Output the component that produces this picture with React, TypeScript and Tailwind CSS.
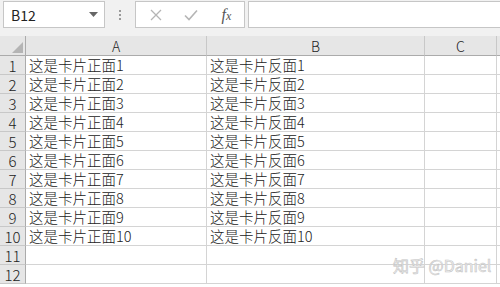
import React from "react";

const font = { fontFamily: '"Noto Sans CJK SC", "Noto Sans", sans-serif' };

export default function App() {
  const rows = Array.from({ length: 12 }, (_, i) => i + 1);
  return (
    <div className="relative w-[500px] h-[287px] overflow-hidden bg-white text-[#222]" style={font}>
      {/* toolbar */}
      <div className="h-[36px] bg-[#f1f1f1] flex items-start pt-[1px]">
        <div className="ml-[3px] w-[102px] h-[27px] bg-white border border-[#c6c6c6] flex items-center pl-[7px] pr-[6px]">
          <span className="text-[14px] leading-none flex-1">B12</span>
          <svg width="9" height="5" viewBox="0 0 9 5"><path d="M0 0 L9 0 L4.5 5 Z" fill="#666" /></svg>
        </div>
        <div className="w-[30px] h-[27px] flex flex-col items-center justify-center gap-[2px]">
          <div className="w-[2px] h-[2px] bg-[#9a9a9a]" />
          <div className="w-[2px] h-[2px] bg-[#9a9a9a]" />
          <div className="w-[2px] h-[2px] bg-[#9a9a9a]" />
        </div>
        <div className="w-[110px] h-[27px] bg-white border border-[#c6c6c6] flex items-center">
          <div className="w-[38px] flex justify-center pl-[2px]">
            <svg width="12" height="12" viewBox="0 0 12 12"><path d="M1 1 L11 11 M11 1 L1 11" stroke="#b5b5b5" strokeWidth="1.3" /></svg>
          </div>
          <div className="w-[36px] flex justify-center">
            <svg width="14" height="12" viewBox="0 0 14 12"><path d="M1 6.5 L5 10.5 L13 1.5" stroke="#b5b5b5" strokeWidth="1.6" fill="none" /></svg>
          </div>
          <div className="w-[36px] flex justify-center">
            <span className="italic text-[16px] leading-none text-[#555]" style={{ fontFamily: '"Liberation Serif", serif' }}>
              f<span className="text-[12px]">x</span>
            </span>
          </div>
        </div>
        <div className="ml-[3px] flex-1 h-[27px] bg-white border border-[#c6c6c6] border-r-0" />
      </div>
      {/* grid */}
      <div className="grid grid-cols-[26px_181px_218px_72px_3px] grid-rows-[20px_repeat(12,19px)] text-[14.5px] font-light">
        <div className="bg-[#e6e6e6] border-r border-b border-[#ababab] relative">
          <svg className="absolute right-[2px] bottom-[2px]" width="11" height="11" viewBox="0 0 11 11"><path d="M11 0 L11 11 L0 11 Z" fill="#b4b4b4" /></svg>
        </div>
        {["A", "B", "C"].map((c) => (
          <div key={c} className="bg-[#e6e6e6] border-r border-b border-[#ababab] border-r-[#c8c8c8] flex items-center justify-center leading-[16px] text-[14px] overflow-hidden">
            {c}
          </div>
        ))}
        <div className="bg-[#e6e6e6] border-b border-[#ababab]" />
        {rows.map((r) => (
          <React.Fragment key={r}>
            <div className="bg-[#e6e6e6] border-r border-b border-[#c8c8c8] border-r-[#ababab] flex items-center justify-center leading-none text-[15px]">{r}</div>
            <div className="border-r border-b border-[#d4d4d4] flex items-center pl-[3px] leading-none whitespace-nowrap">
              {r <= 10 ? `这是卡片正面${r}` : ""}
            </div>
            <div className="border-r border-b border-[#d4d4d4] flex items-center pl-[3px] leading-none whitespace-nowrap">
              {r <= 10 ? `这是卡片反面${r}` : ""}
            </div>
            <div className="border-r border-b border-[#d4d4d4]" />
            <div className="border-b border-[#d4d4d4]" />
          </React.Fragment>
        ))}
      </div>
      {/* watermark */}
      <div
        className="absolute left-[393px] top-[257px] text-[16px] leading-none text-[#f2f2f2] whitespace-nowrap"
        style={{ ...font, WebkitTextStroke: "0.6px #c4c4c4" }}
      >
        知乎 @Daniel
      </div>
    </div>
  );
}
